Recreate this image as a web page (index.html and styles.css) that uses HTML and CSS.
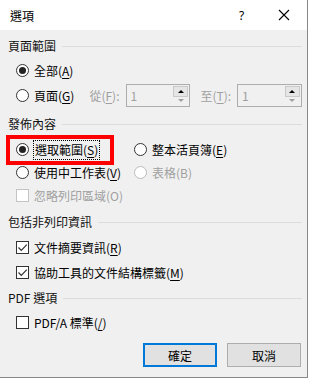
FILE: index.html
```html
<!DOCTYPE html>
<html lang="zh-Hant">
<head>
  <meta charset="UTF-8" />
  <title>選項</title>
  <link rel="stylesheet" href="styles.css">
</head>
<body>
  <div class="dialog">
    <div class="titlebar">
      <span class="title">選項</span>
      <span class="help">?</span>
      <svg class="close" width="12" height="12" viewBox="0 0 12 12"><path d="M1 1 L11 11 M11 1 L1 11" stroke="#000" stroke-width="1.1" fill="none"/></svg>
    </div>

    <div class="content">
      <div class="group g1">
        <div class="group-head"><span>頁面範圍</span><i></i></div>
        <div class="row">
          <span class="radio on"></span><span class="lbl">全部(<u>A</u>)</span>
        </div>
        <div class="row">
          <span class="radio"></span><span class="lbl">頁面(<u>G</u>)</span>
          <span class="lbl dim from">從(<u>F</u>):</span>
          <span class="spin"><span class="val">1</span><span class="btns"><b class="up"></b><b class="down"></b></span></span>
          <span class="lbl dim to">至(<u>T</u>):</span>
          <span class="spin"><span class="val">1</span><span class="btns"><b class="up"></b><b class="down"></b></span></span>
        </div>
      </div>

      <div class="group g2">
        <div class="group-head"><span>發佈內容</span><i></i></div>
        <div class="row">
          <div class="hl"><span class="radio on"></span><span class="lbl focus">選取範圍(<u>S</u>)</span></div>
          <div class="col2"><span class="radio"></span><span class="lbl">整本活頁簿(<u>E</u>)</span></div>
        </div>
        <div class="row">
          <div class="col1"><span class="radio"></span><span class="lbl">使用中工作表(<u>V</u>)</span></div>
          <div class="col2"><span class="radio off"></span><span class="lbl dim">表格(B)</span></div>
        </div>
        <div class="row">
          <span class="check off"></span><span class="lbl dim">忽略列印區域(O)</span>
        </div>
      </div>

      <div class="group g3">
        <div class="group-head"><span>包括非列印資訊</span><i></i></div>
        <div class="row">
          <span class="check on"><svg width="11" height="11" viewBox="0 0 11 11"><path d="M1.5 5.5 L4.3 8.3 L9.8 2.6" stroke="#333" stroke-width="1.2" fill="none"/></svg></span><span class="lbl">文件摘要資訊(<u>R</u>)</span>
        </div>
        <div class="row">
          <span class="check on"><svg width="11" height="11" viewBox="0 0 11 11"><path d="M1.5 5.5 L4.3 8.3 L9.8 2.6" stroke="#333" stroke-width="1.2" fill="none"/></svg></span><span class="lbl">協助工具的文件結構標籤(<u>M</u>)</span>
        </div>
      </div>

      <div class="group g4">
        <div class="group-head"><span>PDF 選項</span><i></i></div>
        <div class="row">
          <span class="check"></span><span class="lbl">PDF/A 標準(<u>/</u>)</span>
        </div>
      </div>

      <div class="buttons">
        <button class="default">確定</button>
        <button>取消</button>
      </div>
    </div>
  </div>
</body>
</html>
```

FILE: styles.css
```css
* { box-sizing: border-box; }
body {
  margin: 0;
  background: #fff;
  font-family: "Noto Sans CJK TC", "Noto Sans", sans-serif;
  font-size: 12px;
  color: #000;
}
.dialog {
  width: 308px;
  height: 378px;
  border-right: 1px solid #888;
  border-bottom: 1px solid #888;
  background: #f0f0f0;
}
.titlebar {
  height: 30px;
  background: #fff;
  display: flex;
  align-items: center;
  padding-left: 10px;
}
.title { flex: 1; font-size: 12px; }
.help { width: 14px; font-family: "Noto Sans", sans-serif; font-size: 12px; margin-right: 25px; }
.close { margin-right: 17px; }

.content { padding: 4px 5px 0 8px; }
.group-head {
  display: flex;
  align-items: center;
  height: 24px;
  line-height: 24px;
  color: #111;
}
.group-head i {
  flex: 1;
  height: 1px;
  background: #dcdcdc;
  margin-left: 6px;
}
.row {
  display: flex;
  align-items: center;
  height: 25px;
  padding-left: 8px;
}
.g1 .row:first-of-type { margin-top: 1px; }
.g2 { margin-top: 4px; }
.g2 .row { height: 23px; }
.g2 .group-head + .row { margin-top: 2px; }
.g3 { margin-top: 3px; }
.g3 .group-head + .row { margin-top: 1px; }
.g4 { margin-top: 1px; }

.lbl { margin-left: 5px; white-space: nowrap; line-height: 16px; }
.lbl u { text-decoration: underline; text-underline-offset: 2px; }
.dim { color: #a0a0a0; }
.from { margin-left: 15px; }
.to { margin-left: 10px; }

.radio {
  width: 13px;
  height: 13px;
  border: 1px solid #333;
  border-radius: 50%;
  background: #fff;
  display: flex;
  align-items: center;
  justify-content: center;
  flex: none;
}
.radio.on::after {
  content: "";
  width: 7px;
  height: 7px;
  border-radius: 50%;
  background: #222;
}
.radio.off { border-color: #bcbcbc; }

.check {
  width: 13px;
  height: 13px;
  border: 1px solid #333;
  background: #fff;
  display: flex;
  align-items: center;
  justify-content: center;
  flex: none;
}
.check.off { border-color: #c4c4c4; }

.spin {
  width: 65px;
  height: 23px;
  border: 1px solid #adadad;
  background: #f0f0f0;
  display: flex;
  margin-left: 6px;
}
.spin .val { flex: 1; color: #a0a0a0; padding-left: 4px; line-height: 21px; }
.spin .btns { width: 16px; display: flex; flex-direction: column; padding: 1px 1px 1px 0; }
.spin b { flex: 1; display: flex; align-items: center; justify-content: center; }
.spin .up { background: #e5e5e5; border: 1px solid #c9c9c9; }
.spin .up::after {
  content: "";
  border: 3px solid transparent;
  border-bottom: 3px solid #000;
  border-top: 0;
}
.spin .down::after {
  content: "";
  border: 3px solid transparent;
  border-top: 3px solid #a0a0a0;
  border-bottom: 0;
}

.hl {
  display: flex;
  align-items: center;
  width: 108px;
  height: 30px;
  border: 4px solid #f00;
  margin: 0 0 0 -10px;
  padding-left: 6px;
  flex: none;
}
.focus { outline: 1px dotted #000; outline-offset: 1px; margin-left: 6px; }
.col1 { display: flex; align-items: center; width: 118px; flex: none; }
.col2 { display: flex; align-items: center; margin-left: 20px; }
.col1 + .col2 { margin-left: 0; }

.buttons {
  display: flex;
  justify-content: flex-end;
  gap: 10px;
  margin-top: 8px;
  padding-right: 1px;
}
button {
  width: 74px;
  height: 24px;
  background: #e1e1e1;
  border: 1px solid #adadad;
  font-family: inherit;
  font-size: 12px;
  padding: 0;
}
button.default { border: 2px solid #0078d7; }
```
